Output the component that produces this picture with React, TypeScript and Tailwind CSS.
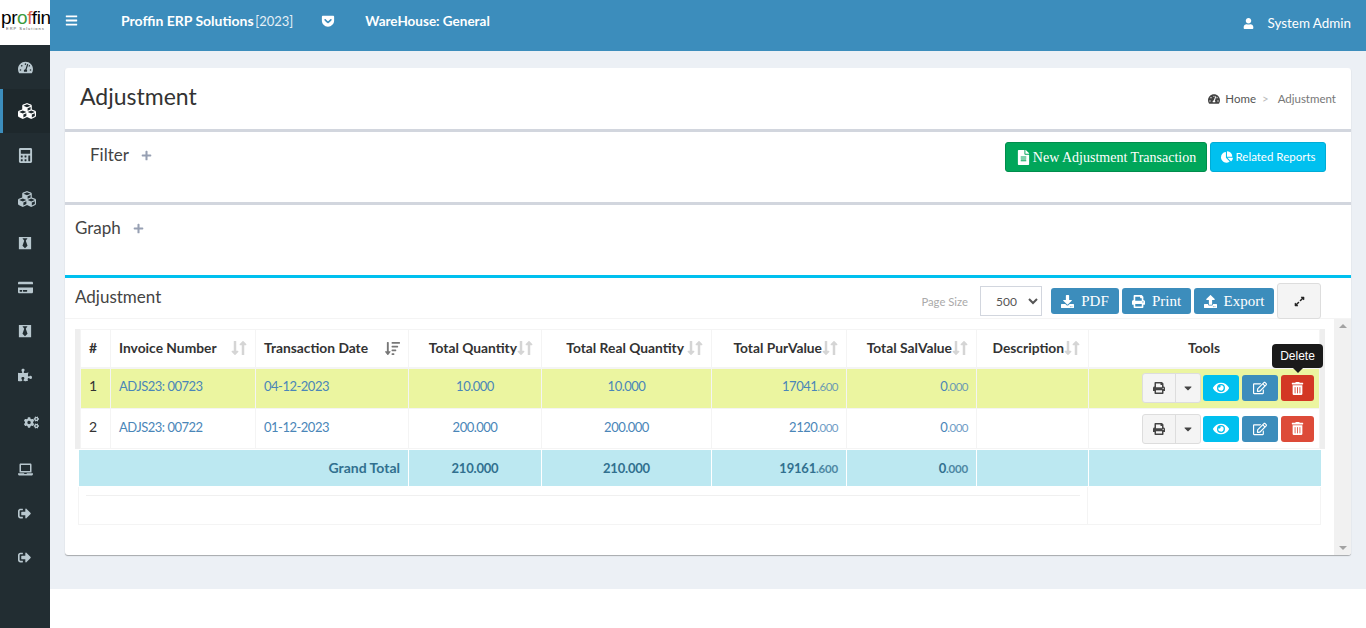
import type { ReactNode } from "react";
import {
  FaBars,
  FaBlackTie,
  FaCaretDown,
  FaChartPie,
  FaCogs,
  FaCreditCard,
  FaCubes,
  FaDownload,
  FaExpandAlt,
  FaEye,
  FaFileAlt,
  FaGetPocket,
  FaLaptop,
  FaLongArrowAltDown,
  FaLongArrowAltUp,
  FaPlus,
  FaPrint,
  FaPuzzlePiece,
  FaRegEdit,
  FaSignOutAlt,
  FaSortAmountDown,
  FaTachometerAlt,
  FaTrashAlt,
  FaUpload,
  FaUser,
  FaCalculator,
} from "react-icons/fa";

// Sidebar menu, top to bottom
const SidebarMenu = () => (
  <aside className="w-[50px] shrink-0 bg-[#222d32] text-[#b8c7ce]">
    <div className="h-[45px] overflow-hidden bg-white pt-[9px] leading-none">
      <div className="whitespace-nowrap pl-[1px] [font-family:Liberation_Sans,sans-serif] text-[19px] leading-[18px] tracking-[-0.4px] text-black">
        pr<span className="text-[#3d9b3d]">o</span>
        <span className="text-[#d9634f]">f</span>fin
      </div>
      <div className="whitespace-nowrap pl-[6px] [font-family:Liberation_Sans,sans-serif] text-[4px] leading-[4px] tracking-[1px] text-[#555]">
        ERP Solutions
      </div>
    </div>
    <div className="flex h-[44px] items-center pl-[18px]">
      <FaTachometerAlt className="text-[15px]" />
    </div>
    <div className="flex h-[44px] items-center border-l-[3px] border-[#3c8dbc] bg-[#1e282c] pl-[15px] text-white">
      <FaCubes className="text-[18px]" />
    </div>
    <div className="flex h-[44px] items-center pl-[18px]">
      <FaCalculator className="text-[15px]" />
    </div>
    <div className="flex h-[44px] items-center pl-[18px]">
      <FaCubes className="text-[18px]" />
    </div>
    <div className="flex h-[44px] items-center pl-[18px]">
      <FaBlackTie className="text-[14px]" />
    </div>
    <div className="flex h-[44px] items-center pl-[18px]">
      <FaCreditCard className="text-[15px]" />
    </div>
    <div className="flex h-[44px] items-center pl-[18px]">
      <FaBlackTie className="text-[14px]" />
    </div>
    <div className="flex h-[44px] items-center pl-[18px]">
      <FaPuzzlePiece className="text-[14px]" />
    </div>
    <div className="flex h-[50px] items-center pl-[24px]">
      <FaCogs className="text-[15px]" />
    </div>
    <div className="flex h-[44px] items-center pl-[18px]">
      <FaLaptop className="text-[15px]" />
    </div>
    <div className="flex h-[44px] items-center pl-[18px]">
      <FaSignOutAlt className="text-[13px]" />
    </div>
    <div className="flex h-[44px] items-center pl-[18px]">
      <FaSignOutAlt className="text-[13px]" />
    </div>
  </aside>
);

const TopBar = () => (
  <header className="flex h-[51px] items-start bg-[#3c8dbc] text-white">
    <FaBars className="ml-[15px] mt-[14px] text-[13px]" />
    <div className="ml-[43px] mt-[11px] text-[14px] leading-[20px]">
      <b>Proffin ERP Solutions</b> <span className="-ml-[2px] text-[13px] text-[#e4eff6]">[2023]</span>
    </div>
    <FaGetPocket className="ml-[28px] mt-[14px] text-[14px]" />
    <b className="ml-[30px] mt-[11px] text-[13.5px] leading-[20px]">WareHouse: General</b>
    <div className="ml-auto mr-[15px] mt-[13px] flex items-center text-[13.4px] leading-[20px]">
      <FaUser className="mr-[14px] text-[11px]" />
      System Admin
    </div>
  </header>
);

const SortIcon = () => (
  <span className="flex shrink-0 text-[#d5d5d5]">
    <FaLongArrowAltDown className="h-[16px] w-[8px]" />
    <FaLongArrowAltUp className="h-[16px] w-[8px]" />
  </span>
);

const SolidButton = ({ className, children }: { className: string; children: ReactNode }) => (
  <button className={`flex h-[26px] items-center justify-center rounded-[3px] text-white ${className}`}>
    {children}
  </button>
);

const Money = ({ whole, dec }: { whole: string; dec: string }) => (
  <>
    {whole}
    <span className="text-[11.5px] opacity-80">.{dec}</span>
  </>
);

const RowTools = ({ danger }: { danger: string }) => (
  <div className="flex items-center justify-end pr-[5px]">
    <div className="flex h-[30px] w-[59px] rounded-[3px] border border-[#ddd] bg-[#f4f4f4] text-[#444]">
      <span className="flex w-[33px] items-center justify-center border-r border-[#ddd]">
        <FaPrint className="text-[12px]" />
      </span>
      <span className="flex flex-1 items-center justify-center">
        <FaCaretDown className="text-[12px]" />
      </span>
    </div>
    <span className="ml-[2px] flex h-[26px] w-[36px] items-center justify-center rounded-[3px] bg-[#00c0ef] text-white">
      <FaEye className="text-[16px]" />
    </span>
    <span className="ml-[3px] flex h-[26px] w-[36px] items-center justify-center rounded-[3px] bg-[#3c8dbc] text-white">
      <FaRegEdit className="text-[14px]" />
    </span>
    <span className={`ml-[3px] flex h-[26px] w-[33px] items-center justify-center rounded-[3px] text-white ${danger}`}>
      <FaTrashAlt className="text-[13px]" />
    </span>
  </div>
);

const rows = [
  {
    no: "1",
    invoice: "ADJS23: 00723",
    date: "04-12-2023",
    qty: "10.000",
    real: "10.000",
    pur: ["17041", "600"],
    sal: ["0", "000"],
    bg: "h-[41px] bg-[#ebf5a0]",
    pad: "pt-[7px]",
    danger: "bg-[#d33724]",
  },
  {
    no: "2",
    invoice: "ADJS23: 00722",
    date: "01-12-2023",
    qty: "200.000",
    real: "200.000",
    pur: ["2120", "000"],
    sal: ["0", "000"],
    bg: "h-[40px] bg-white",
    pad: "pt-[8px]",
    danger: "bg-[#dd4b39]",
  },
];

const headCell = "border border-[#f4f4f4] border-b-2 px-[8px] whitespace-nowrap text-[13.8px] font-bold text-[#333]";
const bodyCell = "border border-[#f4f4f4] px-[8px] align-top text-[13px] leading-[20px] tracking-[-0.5px] text-[#4a86b8]";
const footCell = "border border-white px-[8px] text-[13px] leading-[20px] font-bold tracking-[-0.2px] text-[#31708f]";

const AdjustmentTable = () => (
  <div className="relative">
    <div className="flex">
      <div className="w-[5px] bg-[#eee]" />
      <table className="w-[1239px] table-fixed border-collapse">
        <colgroup>
          <col className="w-[30px]" />
          <col className="w-[145px]" />
          <col className="w-[153px]" />
          <col className="w-[133px]" />
          <col className="w-[170px]" />
          <col className="w-[135px]" />
          <col className="w-[130px]" />
          <col className="w-[112px]" />
          <col className="w-[231px]" />
        </colgroup>
        <thead>
          <tr className="h-[38px]">
            <th className={headCell}>
              <div className="text-left">#</div>
            </th>
            <th className={headCell}>
              <div className="flex items-center justify-between">
                Invoice Number <SortIcon />
              </div>
            </th>
            <th className={headCell}>
              <div className="flex items-center justify-between">
                Transaction Date <FaSortAmountDown className="shrink-0 text-[15px] text-[#777]" />
              </div>
            </th>
            <th className={headCell}>
              <div className="flex items-center justify-end">
                Total Quantity
                <SortIcon />
              </div>
            </th>
            <th className={headCell}>
              <div className="flex items-center justify-end gap-[3px]">
                Total Real Quantity
                <SortIcon />
              </div>
            </th>
            <th className={headCell}>
              <div className="flex items-center justify-end">
                Total PurValue
                <SortIcon />
              </div>
            </th>
            <th className={headCell}>
              <div className="flex items-center justify-end">
                Total SalValue
                <SortIcon />
              </div>
            </th>
            <th className={headCell}>
              <div className="flex items-center justify-end">
                Description
                <SortIcon />
              </div>
            </th>
            <th className={headCell}>Tools</th>
          </tr>
        </thead>
        <tbody>
          {rows.map((row) => (
            <tr key={row.no} className={row.bg}>
              <td className={`${bodyCell} ${row.pad} text-[14px] tracking-normal text-[#333]`}>{row.no}</td>
              <td className={`${bodyCell} ${row.pad}`}>{row.invoice}</td>
              <td className={`${bodyCell} ${row.pad}`}>{row.date}</td>
              <td className={`${bodyCell} ${row.pad} text-center`}>{row.qty}</td>
              <td className={`${bodyCell} ${row.pad} text-center`}>{row.real}</td>
              <td className={`${bodyCell} ${row.pad} text-right`}>
                <Money whole={row.pur[0]} dec={row.pur[1]} />
              </td>
              <td className={`${bodyCell} ${row.pad} text-right`}>
                <Money whole={row.sal[0]} dec={row.sal[1]} />
              </td>
              <td className="border border-[#f4f4f4]" />
              <td className="border border-[#f4f4f4]">
                <RowTools danger={row.danger} />
              </td>
            </tr>
          ))}
        </tbody>
      </table>
      <div className="w-[5px] bg-[#eee]" />
    </div>
    <table className="ml-[3px] w-[1243px] table-fixed border-collapse">
      <colgroup>
        <col className="w-[330px]" />
        <col className="w-[133px]" />
        <col className="w-[170px]" />
        <col className="w-[135px]" />
        <col className="w-[130px]" />
        <col className="w-[112px]" />
        <col className="w-[233px]" />
      </colgroup>
      <tbody>
        <tr className="h-[37px] bg-[#bce8f1]">
          <td className={`${footCell} text-right text-[14px] tracking-normal`}>Grand Total</td>
          <td className={`${footCell} text-center`}>210.000</td>
          <td className={`${footCell} text-center`}>210.000</td>
          <td className={`${footCell} text-right`}>
            <Money whole="19161" dec="600" />
          </td>
          <td className={`${footCell} text-right`}>
            <Money whole="0" dec="000" />
          </td>
          <td className={footCell} />
          <td className={footCell} />
        </tr>
      </tbody>
    </table>
    <div className="ml-[3px] flex h-[38px] w-[1243px] border border-t-0 border-[#f4f4f4]">
      <div className="flex-1 px-[7px] pt-[8px]">
        <div className="h-px bg-[#f0f0f0]" />
      </div>
      <div className="w-[233px] border-l border-[#f4f4f4]" />
    </div>

    {/* Tooltip over the delete button of the first row */}
    <div className="absolute left-[1197px] top-[15px] flex h-[24px] w-[51px] items-center justify-center rounded-[4px] bg-[#1a1a1a] [font-family:Liberation_Sans,sans-serif] text-[12px] text-white">
      Delete
      <span className="absolute -bottom-[5px] left-1/2 h-0 w-0 -translate-x-1/2 border-x-[5px] border-t-[5px] border-x-transparent border-t-[#1a1a1a]" />
    </div>
  </div>
);

export default function App() {
  return (
    <div className="flex h-[628px] w-full [font-family:Lato,sans-serif] overflow-hidden bg-white text-[#333]">
      <SidebarMenu />
      <div className="min-w-0 flex-1">
        <TopBar />
        <main className="h-[538px] bg-[#ecf0f5] px-[15px] pt-[17px]">
          <div className="h-[487px] overflow-hidden rounded-[3px] bg-white shadow-[0_1px_1px_rgba(0,0,0,0.3)]">
            {/* Page title */}
            <div className="flex h-[61px] items-center justify-between pl-[15px] pr-[15px]">
              <h1 className="-mt-[6px] text-[23px] leading-[56px]">Adjustment</h1>
              <div className="flex items-center text-[11.5px] text-[#555]">
                <FaTachometerAlt className="mr-[5px] text-[12px] text-[#444]" />
                Home
                <span className="ml-[6px] mr-[9px] text-[#bbb]">&gt;</span>
                <span className="text-[#777]">Adjustment</span>
              </div>
            </div>

            {/* Filter */}
            <section className="flex h-[73px] justify-between border-t-[3px] border-[#d2d6de] pl-[25px] pr-[25px] pt-[10px]">
              <div className="flex h-[26px] items-center text-[#444]">
                <span className="text-[17px]">Filter</span>
                <FaPlus className="ml-[12px] text-[11px] text-[#97a0b3]" />
              </div>
              <div className="flex gap-[3px]">
                <button className="flex h-[30px] w-[202px] items-center justify-center [font-family:Liberation_Serif,serif] rounded-[3px] border border-[#008d4c] bg-[#00a65a] pt-[1px] text-[14px] text-white">
                  <FaFileAlt className="mr-[2px] text-[15px]" />
                  New Adjustment Transaction
                </button>
                <button className="flex h-[30px] w-[116px] items-center justify-center rounded-[3px] border border-[#00acd6] bg-[#00c0ef] text-[11.5px] text-white">
                  <FaChartPie className="mr-[3px] text-[12px]" />
                  Related Reports
                </button>
              </div>
            </section>

            {/* Graph */}
            <section className="h-[73px] border-t-[3px] border-[#d2d6de] pl-[10px] pt-[10px]">
              <div className="flex h-[26px] items-center text-[#444]">
                <span className="text-[17px]">Graph</span>
                <FaPlus className="ml-[12px] text-[11px] text-[#97a0b3]" />
              </div>
            </section>

            {/* Adjustment list */}
            <section className="border-t-[3px] border-[#00c0ef]">
              <div className="flex h-[41px] items-start justify-between border-b border-[#f4f4f4] pl-[10px] pr-[30px]">
                <h2 className="mt-[7px] text-[17px] leading-[24px] text-[#444]">Adjustment</h2>
                <div className="flex items-start">
                  <span className="mt-[15px] text-[11.3px] leading-[17px] text-[#aaa]">Page Size</span>
                  <select
                    defaultValue="500"
                    className="ml-[12px] mt-[8px] h-[30px] w-[62px] border border-[#d2d6de] bg-white pl-[11px] text-[12px] text-[#555]"
                  >
                    <option value="500">500</option>
                  </select>
                  <div className="ml-[9px] mt-[10px] flex gap-[3px] [font-family:Liberation_Serif,serif] text-[15px]">
                    <SolidButton className="w-[68px] bg-[#3c8dbc]">
                      <FaDownload className="mr-[7px] text-[13px]" />
                      PDF
                    </SolidButton>
                    <SolidButton className="w-[69px] bg-[#3c8dbc]">
                      <FaPrint className="mr-[7px] text-[13px]" />
                      Print
                    </SolidButton>
                    <SolidButton className="w-[80px] bg-[#3c8dbc]">
                      <FaUpload className="mr-[7px] text-[13px]" />
                      Export
                    </SolidButton>
                  </div>
                  <button className="ml-[3px] mt-[5px] flex h-[36px] w-[44px] items-center justify-center rounded-[3px] border border-[#ddd] bg-[#f4f4f4] text-[#222]">
                    <FaExpandAlt className="text-[11px]" />
                  </button>
                </div>
              </div>
              <div className="flex h-[236px]">
                <div className="flex-1 pl-[10px] pt-[10px]">
                  <AdjustmentTable />
                </div>
                <div className="flex w-[17px] flex-col items-center justify-between bg-[#f1f1f1] py-[5px]">
                  <span className="h-0 w-0 border-x-[4px] border-b-[4px] border-x-transparent border-b-[#a3a3a3]" />
                  <span className="h-0 w-0 border-x-[4px] border-t-[4px] border-x-transparent border-t-[#a3a3a3]" />
                </div>
              </div>
            </section>
          </div>
        </main>
      </div>
    </div>
  );
}
